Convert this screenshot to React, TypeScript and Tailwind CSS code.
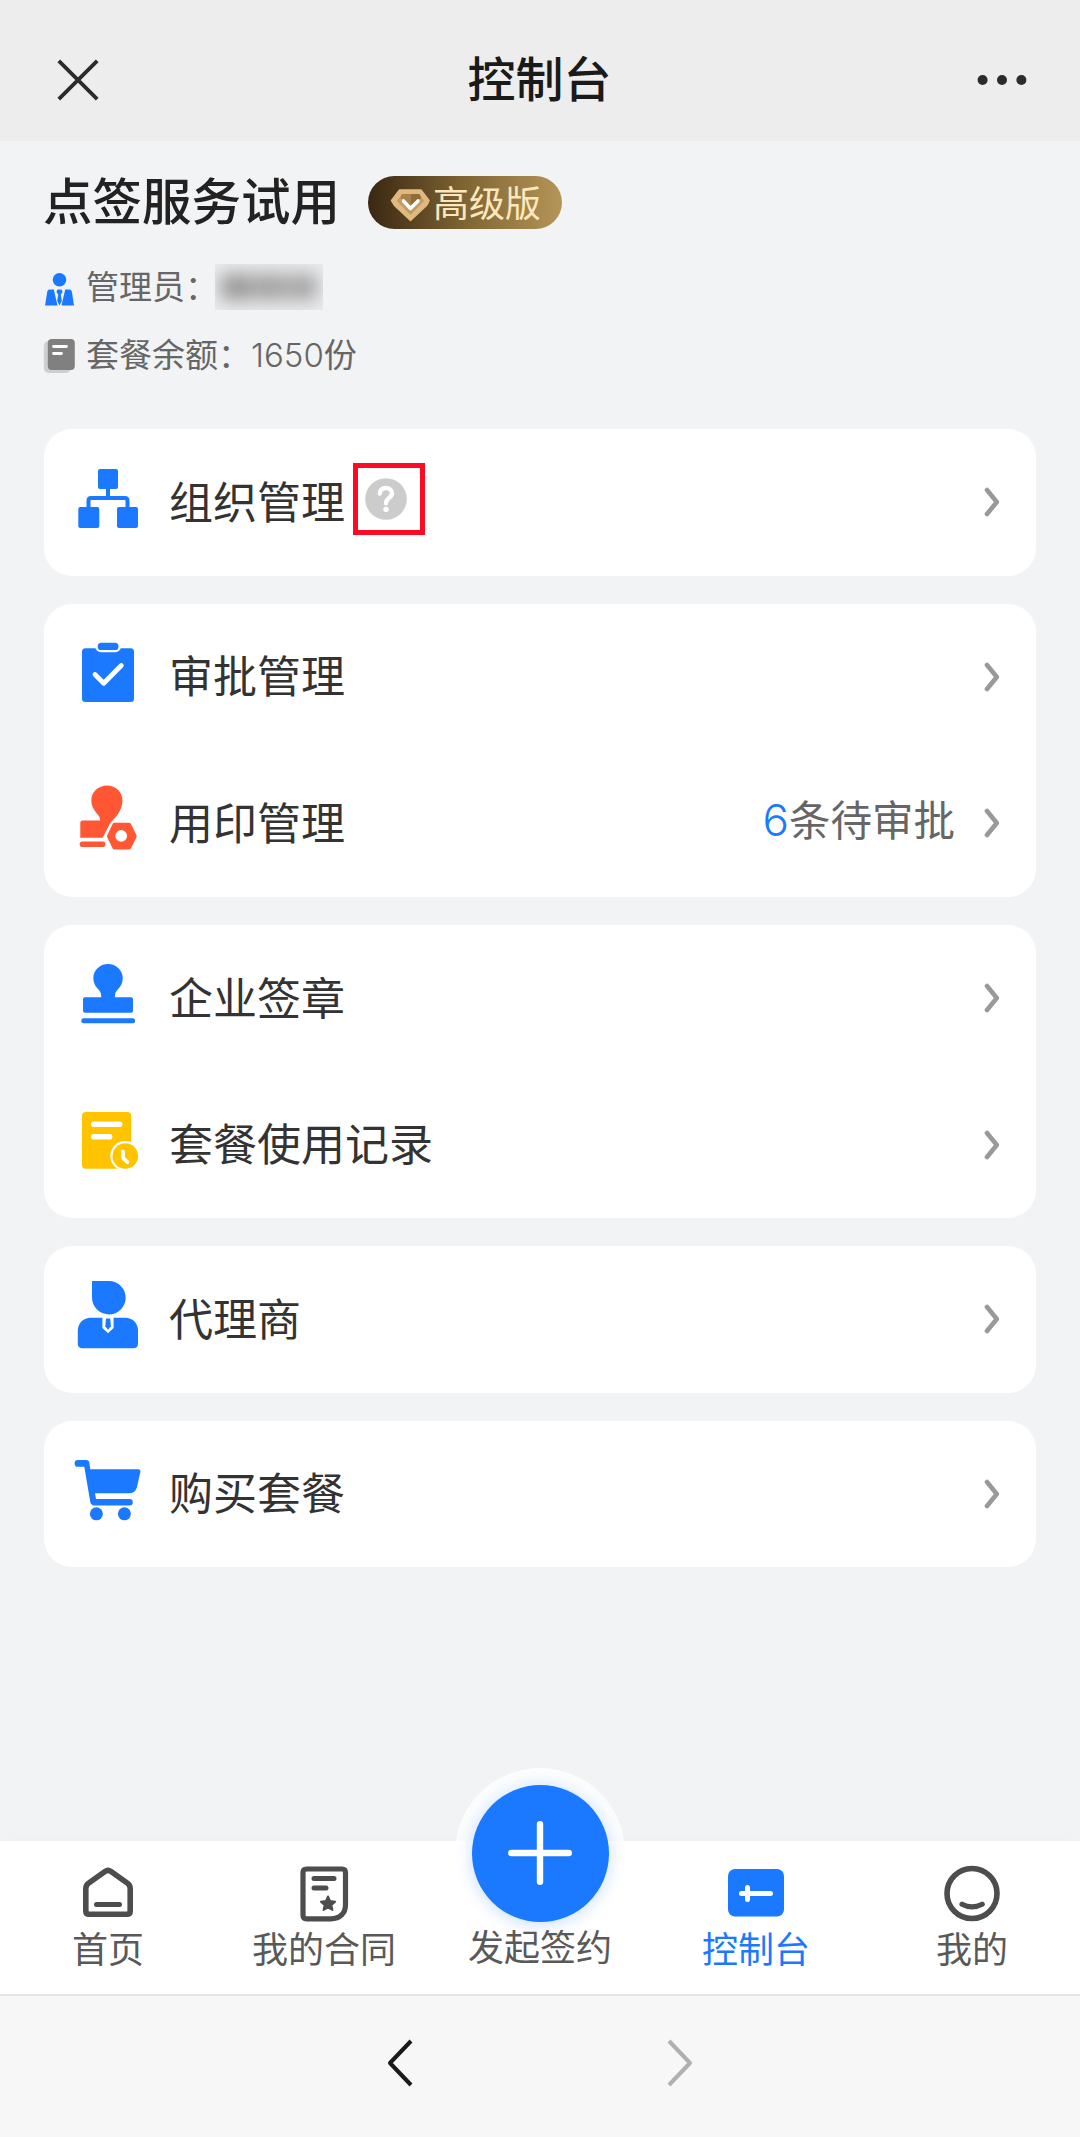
import { FC, ReactNode } from "react";

interface MenuItem {
  label: string;
  icon: ReactNode;
  help?: boolean;
  pending?: number;
}

interface TabProps {
  label: string;
  active?: boolean;
  children: ReactNode;
}

const MenuIcon: FC<{ color: string; children: ReactNode }> = ({ color, children }) => (
  <svg className={`w-[68px] h-[72px] mb-2 shrink-0 ${color}`} viewBox="0 0 68 72" fill="currentColor">
    {children}
  </svg>
);

const OrgIcon = () => (
  <MenuIcon color="text-[#1a79ff]">
    <rect x="24" y="7" width="20" height="20" rx="2" />
    <rect x="4.3" y="45" width="21" height="21" rx="2" />
    <rect x="43" y="45" width="21" height="21" rx="2" />
    <path d="M34 26V36M14.5 46V38.5Q14.5 36 17 36H51Q53.5 36 53.5 38.5V46" fill="none" stroke="currentColor" strokeWidth="4" />
  </MenuIcon>
);

const ApprovalIcon = () => (
  <MenuIcon color="text-[#1a79ff]">
    <rect x="8" y="11.3" width="52" height="53.7" rx="3.5" />
    <rect x="21.3" y="3.7" width="25.6" height="11.5" rx="5.5" fill="white" />
    <rect x="23.7" y="5.7" width="20.8" height="7.3" rx="3.6" />
    <path d="M21 37.5L29.7 46.2L47.3 28.5" fill="none" stroke="white" strokeWidth="4.8" strokeLinecap="round" strokeLinejoin="round" />
  </MenuIcon>
);

const SealIcon = () => (
  <MenuIcon color="text-[#ff5733]">
    <path d="M33 2.5C41.7 2.5 48.5 9 48.5 17.5C48.5 23 46 28.5 42.5 33C40.5 36 37.5 37.5 35.5 41.5L28.7 54.8H6.3V40Q6.3 37.5 8.8 37.5H26C26.5 34 24 32 22 29.5C19 25.5 17.3 22 17.3 17.5C17.3 9 24.3 2.5 33 2.5Z" />
    <rect x="5.7" y="58.5" width="25.8" height="5.6" rx="2.8" />
    <path
      fillRule="evenodd"
      d="M40.5 39.8H55Q56.3 39.8 57 41L62.4 52Q62.9 53.2 62.4 54.4L57 65.3Q56.3 66.5 55 66.5H40.5Q39.2 66.5 38.6 65.3L33.3 54.4Q32.8 53.2 33.3 52L38.6 41Q39.2 39.8 40.5 39.8ZM47.2 47A5.9 5.9 0 1 0 47.2 58.8A5.9 5.9 0 1 0 47.2 47Z"
    />
  </MenuIcon>
);

const StampIcon = () => (
  <MenuIcon color="text-[#1a79ff]">
    <path d="M34 6C42.2 6 48.8 12.4 48.8 20.3C48.8 25 46.6 28.6 44 31.2C41.8 33.6 41 35 41 39.3H57Q59 39.3 59 41.3V52.7Q59 54.7 57 54.7H11Q9 54.7 9 52.7V41.3Q9 39.3 11 39.3H27.2C27.2 35 26.4 33.6 24.2 31.2C21.5 28.6 19.3 25 19.3 20.3C19.3 12.4 25.8 6 34 6Z" />
    <rect x="7.3" y="60.2" width="53.8" height="5" rx="2.5" />
  </MenuIcon>
);

const RecordIcon = () => (
  <MenuIcon color="text-[#ffc300]">
    <rect x="8" y="7" width="49.2" height="56.8" rx="4" />
    <rect x="17" y="16.4" width="31.4" height="5.6" rx="2.8" fill="white" />
    <rect x="17" y="29" width="21.4" height="5.6" rx="2.8" fill="white" />
    <circle cx="51.3" cy="51" r="15" fill="white" />
    <circle cx="51.3" cy="51" r="12.8" />
    <path d="M49 46.5V51.5Q49 53 50 54L53.5 57.2" fill="none" stroke="white" strokeWidth="3.8" strokeLinecap="round" />
  </MenuIcon>
);

const AgentIcon = () => (
  <MenuIcon color="text-[#1a79ff]">
    <path d="M18 2H35A16.7 16.7 0 0 1 35 35.4A17 17 0 0 1 18 18.5Z" />
    <path d="M17 38.7H51C58.5 38.7 64 44 64 51.5V64.5Q64 69.3 59.2 69.3H8.6Q3.8 69.3 3.8 64.5V51.5C3.8 44 9.5 38.7 17 38.7Z" />
    <path d="M28.4 38H39.6V49L34 54.2L28.4 49Z" fill="white" />
    <path d="M32 39.5H36.2L36.9 47.2L34.1 50.8L31.3 47.2Z" />
  </MenuIcon>
);

const CartIcon = () => (
  <MenuIcon color="text-[#1a79ff]">
    <path d="M4 6H12.5Q15 6 15.4 8.5L16.2 15.3H64.3Q66.8 15.3 66.4 17.8L63 33Q61.3 39.3 55 39.3H21L22 45H55.6A3.1 3.1 0 0 1 55.6 51.4H20.5Q17 51.4 16.3 48L10.3 12.8H4A3.4 3.4 0 0 1 4 6Z" />
    <circle cx="22.4" cy="59.8" r="6.5" />
    <circle cx="50.4" cy="59.8" r="6.5" />
  </MenuIcon>
);

const Chevron = () => (
  <svg className="w-[16px] h-[30px] shrink-0" viewBox="0 0 16 30" fill="none" stroke="#999999" strokeWidth="4.6" strokeLinecap="round" strokeLinejoin="round">
    <path d="M3 3L12.8 15L3 27" />
  </svg>
);

const HelpMark = () => (
  <div className="ml-[7px] -mt-[6px] w-[72px] h-[72px] border-5 border-[#ff0a22] flex items-center pl-[7px]">
    <svg className="w-[42px] h-[42px]" viewBox="0 0 42 42">
      <circle cx="21" cy="21" r="20.8" fill="#cccccc" />
      <path d="M14.8 15.6C15.2 11.8 17.6 10 20.8 10C24.6 10 27 12.4 27 15.3C27 20 21 19.8 21 25.2" fill="none" stroke="white" strokeWidth="4.4" strokeLinecap="round" />
      <circle cx="21" cy="31.4" r="2.7" fill="white" />
    </svg>
  </div>
);

const menuGroups: MenuItem[][] = [
  [{ label: "组织管理", icon: <OrgIcon />, help: true }],
  [
    { label: "审批管理", icon: <ApprovalIcon /> },
    { label: "用印管理", icon: <SealIcon />, pending: 6 },
  ],
  [
    { label: "企业签章", icon: <StampIcon /> },
    { label: "套餐使用记录", icon: <RecordIcon /> },
  ],
  [{ label: "代理商", icon: <AgentIcon /> }],
  [{ label: "购买套餐", icon: <CartIcon /> }],
];

const MenuRow: FC<{ item: MenuItem }> = ({ item }) => (
  <div className="h-[146.6px] pl-[30px] pr-[36px] flex items-center">
    {item.icon}
    <span className="ml-[27px] mr-px mb-[5px] text-[44px] leading-none text-[#333333]">{item.label}</span>
    {item.help && <HelpMark />}
    <div className="ml-auto flex items-center">
      {item.pending && (
        <span className="mr-[29px] mb-[7px] text-[41.5px] leading-none text-[#666666]">
          <span className="font-['Inter'] font-light text-[44px] leading-none text-[#1a79ff]">{item.pending}</span>
          条待审批
        </span>
      )}
      <Chevron />
    </div>
  </div>
);

const Tab: FC<TabProps> = ({ label, active, children }) => (
  <div className={`w-[216px] pt-[24px] flex flex-col items-center ${active ? "text-[#1a79ff]" : "text-[#4d4d4d]"}`}>
    <svg className="w-[58px] h-[58px]" viewBox="0 0 58 58" fill="none" stroke="currentColor" strokeWidth="5.6" strokeLinecap="round" strokeLinejoin="round">
      {children}
    </svg>
    <span className={`mt-[6px] text-[36px] leading-none ${active ? "" : "text-[#595959]"}`}>{label}</span>
  </div>
);

const App: FC = () => {
  return (
    <div className="w-[1080px] h-[2137px] flex flex-col overflow-hidden bg-[#f2f3f5] font-['Noto_Sans_CJK_SC',sans-serif]">
      <header className="h-[141px] shrink-0 pt-[18px] px-[57px] flex items-center justify-between bg-[#ededed]">
        <svg className="w-[42px] h-[42px]" viewBox="0 0 42 42" stroke="#2b2b2b" strokeWidth="3.8">
          <path d="M1.8 1.8L40.2 40.2M40.2 1.8L1.8 40.2" />
        </svg>
        <h1 className="ml-[3px] mb-[7px] text-[48px] leading-none font-medium text-[#1a1a1a]">控制台</h1>
        <svg className="-mr-[4px] w-[50px] h-[10px]" viewBox="0 0 50 10" fill="#2b2b2b">
          <circle cx="5.6" cy="5" r="5" />
          <circle cx="25" cy="5" r="5" />
          <circle cx="44.4" cy="5" r="5" />
        </svg>
      </header>

      <section className="h-[288px] shrink-0 pl-[43px] pt-[35px]">
        <div className="h-[53px] flex items-center">
          <h2 className="w-[325px] mb-[7px] text-[49.5px] leading-none font-medium text-[#222222]">点签服务试用</h2>
          <div className="w-[194px] h-[53px] rounded-full flex items-center pl-[22px] bg-linear-to-r from-[#3a2813] via-[#806533] to-[#b59558]">
            <svg className="w-[40px] h-[38px]" viewBox="0 0 40 38">
              <path d="M9.5 6H31L39 16.5Q38 20 36 22L20.5 36.5L5 22Q3 19 1.5 16.5Z" fill="#dfb980" stroke="#dfb980" strokeWidth="1.5" strokeLinejoin="round" />
              <path d="M12 10H29.5L34 17L20.5 31L7 17Z" fill="#c49b5e" />
              <path d="M20.5 10H29.5L31 14L20.5 22Z" fill="#8f6c38" />
              <path d="M12 10H20.5V22L10.5 14Z" fill="#a88249" />
              <path d="M13.5 17L20.5 24.5L28 17" fill="none" stroke="white" strokeWidth="3.6" strokeLinecap="round" strokeLinejoin="round" />
            </svg>
            <span className="ml-[3px] mb-[3px] text-[36px] leading-none text-[#ffe7bd] whitespace-nowrap">高级版</span>
          </div>
        </div>

        <div className="mt-[35px] h-[46px] flex items-center text-[33px] text-[#666666]">
          <svg className="w-[32px] h-[34px] mt-1" viewBox="0 0 32 34" fill="#1a79ff">
            <circle cx="16.5" cy="7.8" r="6.8" />
            <path d="M6.5 17.5H10.8L14.5 33.5H2L4.3 19.5Q4.8 17.7 6.5 17.5Z" />
            <path d="M22.2 17.5H26.5Q28.3 17.7 28.8 19.5L31 33.5H18.5Z" />
            <path d="M14.4 17.5H18.6L19.6 20L17.8 22.5L18.8 29L16.5 33.5L14.2 29L15.2 22.5L13.4 20Z" />
          </svg>
          <span className="ml-[11px] mb-[3px] leading-none">管理员：</span>
          <div className="-ml-[3px] w-[108px] h-[46px] flex items-center justify-center overflow-hidden bg-[#ebecee]">
            <div className="w-[96px] h-[26px] flex justify-between blur-[9px]">
              <div className="w-[31px] bg-[#969696]" />
              <div className="w-[31px] bg-[#a0a0a0]" />
              <div className="w-[30px] bg-[#a3a3a3]" />
            </div>
          </div>
        </div>

        <div className="mt-[23px] h-[46px] flex items-center text-[33px] text-[#666666]">
          <svg className="w-[32px] h-[36px]" viewBox="0 0 32 36">
            <rect x="0.8" y="3" width="27" height="32" rx="5" fill="#cfcfd0" />
            <rect x="4.8" y="1" width="27" height="31" rx="4" fill="#808080" />
            <path d="M10.5 8.5H23.5M10.5 15.5H18.5" stroke="white" strokeWidth="2.8" strokeLinecap="round" />
          </svg>
          <span className="ml-[11px] mb-[4px] leading-none">
            套餐余额：<span className="font-['Inter'] font-light leading-none">1650</span>份
          </span>
        </div>
      </section>

      <main className="px-[44px] flex-1 flex flex-col gap-7">
        {menuGroups.map((group) => (
          <div key={group[0].label} className="rounded-[28px] bg-white">
            {group.map((item) => (
              <MenuRow key={item.label} item={item} />
            ))}
          </div>
        ))}
      </main>

      <nav className="h-[155px] shrink-0 flex bg-white border-b-2 border-[#e5e5e5] shadow-[0_-4px_16px_rgba(0,0,0,0.015)]">
        <Tab label="首页">
          <path d="M6.8 23.5Q6.8 20 9.8 18L26 6.5Q29 4.3 32 6.5L48.2 18Q51.2 20 51.2 23.5V46Q51.2 49.2 48 49.2H10Q6.8 49.2 6.8 46Z" />
          <path d="M17.5 39.5H40.5" strokeWidth="5" />
        </Tab>
        <Tab label="我的合同">
          <path d="M8 7.5Q8 4 11.5 4H47Q50.5 4 50.5 7.5V40C50.5 48 45 53.8 36 53.8H11.5Q8 53.8 8 50.3Z" strokeWidth="5.2" />
          <path d="M19 13.5H39M19 23H31" strokeWidth="5" />
          <path d="M33 31.5L35.1 36.1L40.1 36.7L36.4 40.1L37.4 45L33 42.5L28.6 45L29.6 40.1L25.9 36.7L30.9 36.1Z" fill="currentColor" strokeWidth="2" />
        </Tab>
        <div className="relative w-[216px] flex flex-col items-center">
          <div className="absolute -top-[73px] w-[170px] h-[170px] rounded-full bg-white/80 flex items-center justify-center">
            <div className="w-[137px] h-[137px] rounded-full flex items-center justify-center bg-[#1a79ff] shadow-[0_2px_16px_rgba(26,121,255,0.25)]">
              <svg className="w-[64px] h-[64px]" viewBox="0 0 64 64" stroke="white" strokeWidth="6.4" strokeLinecap="round">
                <path d="M32 3.2V60.8M3.2 32H60.8" />
              </svg>
            </div>
          </div>
          <span className="relative mt-[86px] text-[36px] leading-none text-[#595959]">发起签约</span>
        </div>
        <Tab label="控制台" active>
          <rect x="1" y="4" width="56" height="47.5" rx="7" fill="currentColor" stroke="none" />
          <path d="M14.5 28.5H43.5M20.5 22.5V34.5" stroke="white" strokeWidth="5" />
        </Tab>
        <Tab label="我的">
          <circle cx="29" cy="28.5" r="25" />
          <path d="M19 39.2Q29 44.5 39.2 39.2" strokeWidth="5.2" />
        </Tab>
      </nav>

      <footer className="h-[141px] shrink-0 flex justify-between px-[387px] pt-[42px] bg-[#f7f7f7]">
        <svg className="w-[26px] h-[50px]" viewBox="0 0 26 50" fill="none" stroke="#1a1a1a" strokeWidth="4">
          <path d="M24 3L3 25L24 47" strokeLinejoin="round" />
        </svg>
        <svg className="w-[26px] h-[50px]" viewBox="0 0 26 50" fill="none" stroke="#b0b0b0" strokeWidth="4">
          <path d="M2 3L23 25L2 47" strokeLinejoin="round" />
        </svg>
      </footer>
    </div>
  );
};

export default App;
